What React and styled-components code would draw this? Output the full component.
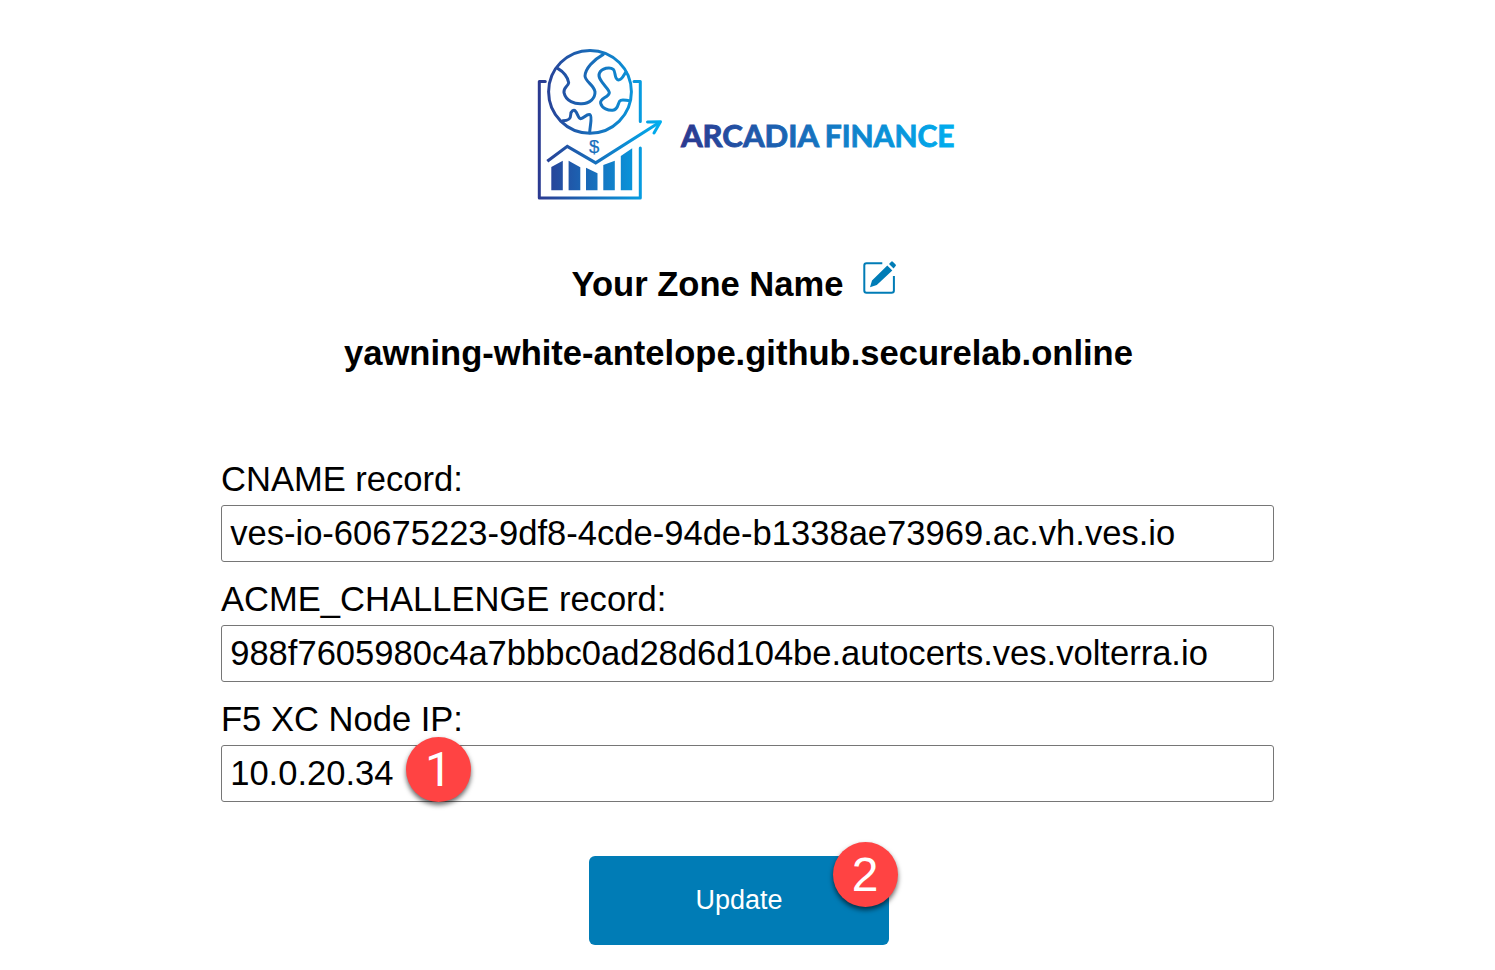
import React from "react";
import styled, { createGlobalStyle } from "styled-components";

const GlobalStyle = createGlobalStyle`
  * { box-sizing: border-box; }
  body {
    margin: 0;
    background: #fff;
    color: #000;
    font-family: "Liberation Sans", Arial, sans-serif;
  }
`;

const Page = styled.main`
  display: flex;
  flex-direction: column;
  align-items: center;
  width: 1495px;
  height: 970px;
  padding-top: 40px;
  overflow: hidden;
`;

const Logo = styled.svg`
  display: block;
  flex: none;
  width: 435px;
  height: 170px;
`;

const Header = styled.header`
  display: flex;
  flex-direction: column;
  align-items: center;
  width: 1053px;
  padding-right: 18px;
`;

const TitleRow = styled.div`
  display: flex;
  align-items: flex-start;
  gap: 17px;
  height: 40px;
  margin: 48px 5px 0 0;
`;

const Title = styled.h1`
  margin: 6px 0 0;
  font-size: 34.56px;
  line-height: 40px;
  font-weight: 700;
  white-space: nowrap;
`;

const ZoneName = styled.h2`
  margin: 35px 0 0;
  font-size: 34.56px;
  line-height: 40px;
  font-weight: 700;
  white-space: nowrap;
`;

const EditIcon = styled.svg`
  display: block;
  width: 40px;
  height: 40px;
`;

const Form = styled.form`
  display: flex;
  flex-direction: column;
  width: 1053px;
  margin-top: 86px;
`;

const Field = styled.div`
  position: relative;
  display: flex;
  flex-direction: column;
  height: 120px;
`;

const Label = styled.label`
  height: 46px;
  font-size: 34.56px;
  line-height: 40px;
`;

const Input = styled.input`
  height: 57px;
  padding: 0 8.2px 1px;
  border: 1px solid #767676;
  border-radius: 3px;
  background: #fff;
  color: #000;
  font: 34.56px "Liberation Sans", Arial, sans-serif;
  outline: none;
`;

const ButtonWrap = styled.div`
  position: relative;
  align-self: center;
  width: 300px;
  margin: 37px 17px 0 0;
`;

const Button = styled.button`
  display: block;
  width: 100%;
  height: 89px;
  padding: 0;
  border: 0;
  border-radius: 6px;
  background: #007cb6;
  color: #fff;
  font: 27px "Liberation Sans", Arial, sans-serif;
`;

const Badge = styled.span`
  position: absolute;
  top: ${(p) => p.$top}px;
  left: ${(p) => p.$left}px;
  display: flex;
  align-items: center;
  justify-content: center;
  width: 65px;
  height: 65px;
  border-radius: 50%;
  background: #ff4343;
  color: #fff;
  font: ${(p) => p.$font};
  box-shadow: 0 3px 5px rgba(0, 0, 0, 0.6);
`;

const fields = [
  { id: "cname", label: "CNAME record:", value: "ves-io-60675223-9df8-4cde-94de-b1338ae73969.ac.vh.ves.io" },
  { id: "acme", label: "ACME_CHALLENGE record:", value: "988f7605980c4a7bbbc0ad28d6d104be.autocerts.ves.volterra.io" },
  { id: "node", label: "F5 XC Node IP:", value: "10.0.20.34", badge: "1" },
];

function ArcadiaLogo() {
  return (
    <Logo viewBox="0 0 435 170" role="img" aria-label="Arcadia Finance">
      <defs>
        <linearGradient id="mark" gradientUnits="userSpaceOnUse" x1="8" y1="0" x2="130" y2="0">
          <stop offset="0" stopColor="#2b3990" />
          <stop offset="1" stopColor="#00aeef" />
        </linearGradient>
        <linearGradient id="land" gradientUnits="userSpaceOnUse" x1="24" y1="0" x2="390" y2="0">
          <stop offset="0" stopColor="#2b3990" />
          <stop offset="1" stopColor="#00aeef" />
        </linearGradient>
        <linearGradient id="word" gradientUnits="userSpaceOnUse" x1="151" y1="0" x2="424" y2="0">
          <stop offset="0" stopColor="#2b3990" />
          <stop offset="1" stopColor="#00aeef" />
        </linearGradient>
      </defs>
      <g fill="none" stroke="url(#mark)" strokeWidth="3" strokeLinecap="round" strokeLinejoin="round">
        <circle cx="60" cy="51.8" r="41.4" />
        <path d="M15.3 41.5H9.3V158H110.3V108" />
        <path d="M104 41.5H110.3V81.5" />
        <path d="M17.3 121.3L37.3 106.3L65.7 122.8L130 82" strokeLinecap="butt" strokeLinejoin="miter" strokeWidth="3.2" />
        <path d="M117.5 81.9L130.5 81.7L124 93" />
        <g transform="scale(.33333)" stroke="url(#land)" strokeWidth="9">
          <path d="M84 86C100 95 114 112 116 128C114 140 100 142 102 158C108 185 135 192 155 191C180 190 196 175 195 155C192 135 166 125 165 108C166 85 190 60 220 43" />
          <path d="M288 96C280 105 278 120 265 120C252 118 258 95 250 88C240 80 215 84 208 100C200 120 238 145 238 158C236 172 208 175 212 190C216 205 235 212 248 211C268 208 262 185 272 181C280 178 290 182 298 182" />
          <path d="M98 242C115 242 122 238 122 225C122 212 132 208 136 213C144 222 144 235 152 236C162 236 170 220 180 224C188 230 180 255 179 278" />
        </g>
      </g>
      <g fill="url(#mark)">
        <path d="M21.3 150.3V127L32.8 120.7V150.3ZM38.6 150.3V120.7L50.3 127.3V150.3ZM56 150.3V127.7L67.5 133.3V150.3ZM73.3 150.3V125L84.8 120.7V150.3ZM90.8 150.3V116L102.2 108.3V150.3Z" />
        <text x="64.2" y="113" textAnchor="middle" fontFamily="Liberation Sans, sans-serif" fontSize="18.5" stroke="url(#mark)" strokeWidth=".2">$</text>
      </g>
      <g fill="url(#word)" stroke="url(#word)" strokeWidth=".9" fontFamily="Lato, sans-serif" fontWeight="700" fontSize="29.5">
        <text x="151" y="107.4" textLength="138" lengthAdjust="spacingAndGlyphs">ARCADIA</text>
        <text x="294.7" y="107.4" textLength="129.8" lengthAdjust="spacingAndGlyphs">FINANCE</text>
      </g>
    </Logo>
  );
}

function Edit() {
  return (
    <EditIcon viewBox="0 0 40 40" aria-hidden="true">
      <path d="M22.3 5.3H6.5Q4.3 5.3 4.3 7.5V32.5Q4.3 34.7 6.5 34.7H31.5Q33.9 34.7 33.9 32.5V18" fill="none" stroke="#007cb6" strokeWidth="2" />
      <path d="M10 29.3L12 22.5L27.3 7.5L32.3 12.5L16.8 27ZM29 6L31.2 3.7Q32 3 32.8 3.7L35.6 6.5Q36.4 7.3 35.6 8.1L33.6 10.4Z" fill="#007cb6" />
    </EditIcon>
  );
}

export default function App() {
  return (
    <>
      <GlobalStyle />
      <Page>
        <ArcadiaLogo />
        <Header>
          <TitleRow>
            <Title>Your Zone Name</Title>
            <Edit />
          </TitleRow>
          <ZoneName>yawning-white-antelope.github.securelab.online</ZoneName>
        </Header>
        <Form onSubmit={(e) => e.preventDefault()}>
          {fields.map((f) => (
            <Field key={f.id}>
              <Label htmlFor={f.id}>{f.label}</Label>
              <Input id={f.id} defaultValue={f.value} spellCheck={false} />
              {f.badge && <Badge $top={37.5} $left={185} $font="48px/65px Roboto, sans-serif">{f.badge}</Badge>}
            </Field>
          ))}
          <ButtonWrap>
            <Button type="submit">Update</Button>
            <Badge $top={-14.5} $left={243.5} $font='48px/65px "Liberation Sans", Arial, sans-serif'>2</Badge>
          </ButtonWrap>
        </Form>
      </Page>
    </>
  );
}
